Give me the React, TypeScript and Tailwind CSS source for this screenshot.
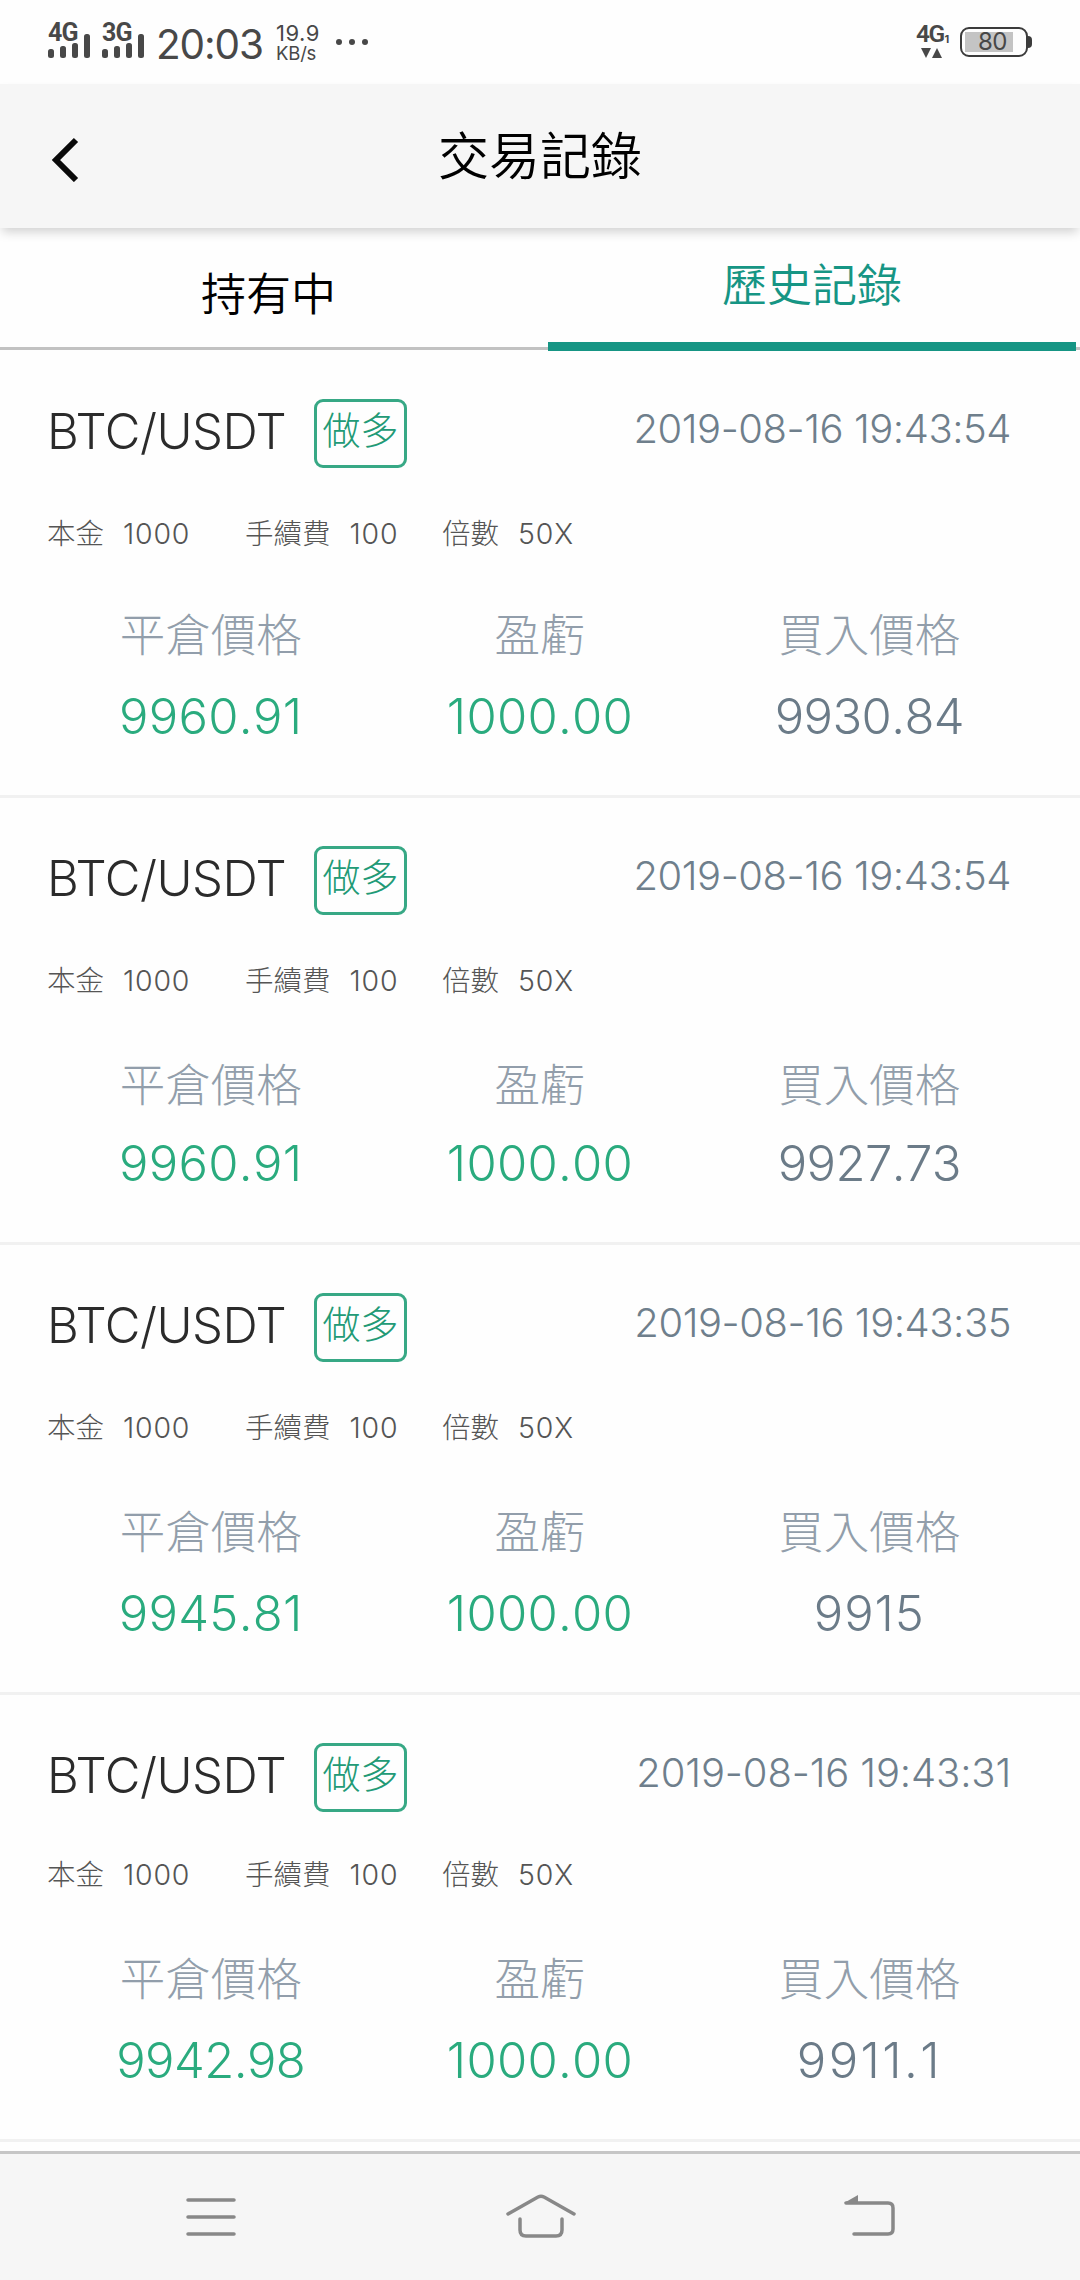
import React from 'react';

interface TradeRecord {
    pair: string;
    side: string;
    time: string;
    principal: string;
    fee: string;
    leverage: string;
    closePrice: string;
    profit: string;
    buyPrice: string;
    rowClass: string;
    metaClass: string;
    labelClass: string;
    valueClass: string;
}

const base = {
    pair: 'BTC/USDT',
    side: '做多',
    principal: '1000',
    fee: '100',
    leverage: '50X',
    profit: '1000.00',
    rowClass: 'h-[447px]',
    metaClass: 'mt-[49px]',
    labelClass: 'mt-[58px]',
    valueClass: 'mt-[27px]',
};

const records: TradeRecord[] = [
    { ...base, time: '2019-08-16 19:43:54', closePrice: '9960.91', buyPrice: '9930.84' },
    { ...base, time: '2019-08-16 19:43:54', closePrice: '9960.91', buyPrice: '9927.73', labelClass: 'mt-[61px]', valueClass: 'mt-[24px]' },
    { ...base, time: '2019-08-16 19:43:35', closePrice: '9945.81', buyPrice: '9915', rowClass: 'h-[450px]', labelClass: 'mt-[61px]' },
    { ...base, time: '2019-08-16 19:43:31', closePrice: '9942.98', buyPrice: '9911.1', metaClass: 'mt-[46px]', labelClass: 'mt-[61px]' },
];

// Opens up numbers with many narrow 1s so that values keep an even width
const spacingFor = (text: string, offset: number) => {
    const ones = text.split('1').length - 1;
    return offset + (ones / text.length) * 6;
};

function Signal({ label }: { label: string }) {
    return (
        <div className="relative w-[54px] h-[38px]">
            <span className="absolute left-0 top-0 font-['Roboto'] text-[25px] leading-[19px] font-bold tracking-[-0.8px]">{label}</span>
            <svg className="absolute left-0 top-0" width="44" height="38" viewBox="0 0 44 38" fill="currentColor">
                <rect x="0" y="26" width="6" height="9" rx="2.5" />
                <rect x="12" y="23" width="6" height="12" rx="2.5" />
                <rect x="24" y="20" width="6" height="15" rx="2.5" />
                <rect x="36" y="11" width="6" height="24" rx="2.5" />
            </svg>
        </div>
    );
}

function StatusBar() {
    return (
        <div className="h-[84px] flex items-start justify-between pl-12 pr-[48px] text-[#484848]">
            <div className="flex items-start">
                <div className="flex pt-[23px]">
                    <Signal label="4G" />
                    <Signal label="3G" />
                </div>
                <span className="w-[120px] mt-[24px] text-[40.5px] leading-[41px] tracking-[-1.1px]">20:03</span>
                <div className="w-[60px] mt-[23px] text-[22px] leading-[20px]">
                    <div className="tracking-[0.5px]">19.9</div>
                    <div className="text-[18.5px] tracking-[-0.2px]">KB/s</div>
                </div>
                <svg className="mt-[38px]" width="34" height="8" viewBox="0 0 34 8" fill="currentColor">
                    <circle cx="3" cy="4" r="3" />
                    <circle cx="16" cy="4" r="3" />
                    <circle cx="29" cy="4" r="3" />
                </svg>
            </div>
            <div className="flex items-start">
                <div className="w-[44px] mt-[24px]">
                    <div className="flex items-end h-[20px]">
                        <span className="font-['Roboto'] text-[24.5px] leading-[20px] font-semibold tracking-[-1.6px]">4G</span>
                        <span className="text-[11px] leading-[10px] font-bold ml-[1px]">1</span>
                    </div>
                    <svg className="ml-[5px] mt-[4px]" width="22" height="10" viewBox="0 0 22 10" fill="currentColor">
                        <path d="M0 0h10L5 10z" />
                        <path d="M11 10h10L16 0z" />
                    </svg>
                </div>
                <div className="flex items-center mt-[27px]">
                    <div className="w-[68px] h-[30px] border-2 border-[#3c3c3c] rounded-[9px] p-[3px]">
                        <div className="w-[48px] h-full bg-[#c4c4c4] text-[24px] leading-[20px] tracking-[-0.5px] pl-[13px]">80</div>
                    </div>
                    <div className="w-[4px] h-[12px] bg-[#3c3c3c] rounded-r-full"></div>
                </div>
            </div>
        </div>
    );
}

function Header() {
    return (
        <header className="relative z-10 h-[144px] bg-[#f6f6f6] flex items-center justify-center shadow-[0_6px_10px_-2px_rgba(0,0,0,0.18)]">
            <svg className="absolute left-[51px] top-[52px]" width="30" height="46" viewBox="0 0 30 46" fill="none" stroke="#0a0a0a" strokeWidth="6">
                <path d="M25 4L5 24l20 20" />
            </svg>
            <h1 className="pt-[1px] text-[51px] leading-[60px] font-[350] text-black">交易記錄</h1>
        </header>
    );
}

function Tabs() {
    return (
        <div className="h-[123px] flex text-[45px] font-[350]">
            <button className="w-[548px] h-[122px] pr-[11px] pt-[14px] border-b-3 border-[#c2c2c2] text-black">持有中</button>
            <button className="w-[528px] h-[123px] pt-[1px] border-b-9 border-[#169584] text-[#169584]">歷史記錄</button>
            <div className="flex-1 h-[122px] border-b-3 border-[#c2c2c2]"></div>
        </div>
    );
}

function Meta({ label, value, className }: { label: string; value: string; className: string }) {
    return (
        <div className={`flex gap-[19px] ${className}`}>
            <span>{label}</span>
            <span className="tracking-[0.8px]">{value}</span>
        </div>
    );
}

interface StatProps {
    label: string;
    value: string;
    color: string;
    valueClass: string;
}

function Stat({ label, value, color, valueClass }: StatProps) {
    return (
        <div className="text-center">
            <div className="text-[45.5px] leading-[54px] text-[#929eab]">{label}</div>
            <div className={`text-[49px] leading-[54px] ${valueClass} ${color}`} style={{ letterSpacing: spacingFor(value, -0.6) }}>
                {value}
            </div>
        </div>
    );
}

function RecordRow({ record }: { record: TradeRecord }) {
    return (
        <li className={`pt-[48px] border-b-3 border-[#f1f1f1] ${record.rowClass}`}>
            <div className="flex h-[69px] pl-[47px] pr-[69px]">
                <span className="w-[267px] text-[49px] leading-[65px] tracking-[-0.5px] text-[#2b2b2b]">{record.pair}</span>
                <span className="w-[93px] h-[69px] border-3 border-[#37a885] rounded-[9px] text-center text-[38px] leading-[57px] text-[#229a76]">
                    {record.side}
                </span>
                <span
                    className="ml-auto text-[40px] leading-[59px] [font-kerning:none] text-[#6f7f8c]"
                    style={{ letterSpacing: spacingFor(record.time, -1.4) }}
                >
                    {record.time}
                </span>
            </div>
            <div className={`flex pl-[47px] text-[28.5px] leading-[34px] [font-kerning:none] text-[#555555] ${record.metaClass}`}>
                <Meta className="w-[198px]" label="本金" value={record.principal} />
                <Meta className="w-[197px]" label="手續費" value={record.fee} />
                <Meta className="" label="倍數" value={record.leverage} />
            </div>
            <div className={`grid grid-cols-3 px-[46px] [font-kerning:none] ${record.labelClass}`}>
                <Stat label="平倉價格" value={record.closePrice} color="text-[#2aab7e]" valueClass={record.valueClass} />
                <Stat label="盈虧" value={record.profit} color="text-[#2aab7e]" valueClass={record.valueClass} />
                <Stat label="買入價格" value={record.buyPrice} color="text-[#6b7b88]" valueClass={record.valueClass} />
            </div>
        </li>
    );
}

function NavBar() {
    return (
        <nav className="h-[129px] shrink-0 bg-[#f6f6f6] border-t-3 border-[#c6c6c6]">
            <div className="flex justify-between pt-[38px] pl-[186px] pr-[184px]">
                <svg width="50" height="50" viewBox="0 0 50 50" fill="none" stroke="#888888" strokeWidth="3.5" strokeLinecap="round">
                    <path d="M2 8h46M2 25h46M2 42h46" />
                </svg>
                <svg className="ml-[2px]" width="70" height="50" viewBox="0 0 70 50" fill="none" stroke="#888888" strokeWidth="3.5" strokeLinecap="round" strokeLinejoin="round">
                    <path d="M2 22L32 5q3-1.500 6 0L68 22" />
                    <path d="M14 27v11q0 6 6 6h30q6 0 6-6V27" />
                </svg>
                <svg width="52" height="50" viewBox="0 0 52 50" fill="none" stroke="#888888" strokeWidth="3.5" strokeLinecap="round">
                    <path d="M2 11h42q5 0 5 5v21q0 5-5 5H10" />
                    <path d="M0 11L14 3v9z" fill="#888888" stroke="none" />
                </svg>
            </div>
        </nav>
    );
}

export default function App() {
    return (
        <div className="w-[1080px] h-[2280px] flex flex-col overflow-hidden bg-[#fefefe] font-['Inter','Noto_Sans_CJK_TC',sans-serif] font-normal">
            <StatusBar />
            <Header />
            <Tabs />
            <ul className="flex-1 overflow-hidden font-light">
                {records.map((record, idx) => (
                    <RecordRow key={idx} record={record} />
                ))}
            </ul>
            <NavBar />
        </div>
    );
}
